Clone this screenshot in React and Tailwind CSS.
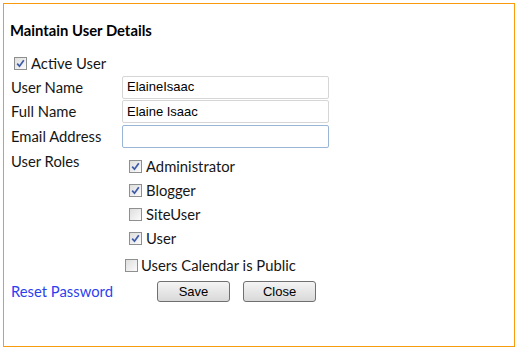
import React from 'react';

const labelFont = { fontFamily: 'Lato, "Open Sans", sans-serif' };

function Box({ checked }) {
  return (
    <span className="inline-flex items-center justify-center w-[13px] h-[13px] border border-[#8e8f8f] bg-gradient-to-br from-[#dedede] to-[#fbfbfb] shrink-0">
      {checked && (
        <svg width="9" height="9" viewBox="0 0 9 9">
          <path d="M1.2 4.6 L3.5 7.2 L7.8 1.2" fill="none" stroke="#3d5aa8" strokeWidth="1.7" />
        </svg>
      )}
    </span>
  );
}

function Check({ checked, label, gap = 'gap-[4px]' }) {
  return (
    <div className={`flex items-center ${gap}`}>
      <Box checked={checked} />
      <span className="text-[14.8px] text-[#161616]">{label}</span>
    </div>
  );
}

function Field({ value }) {
  return (
    <div className="w-[207px] h-[23px] border border-[#d6d6d6] rounded-[2px] bg-white flex items-center px-[4px] text-[13px] text-black font-['Liberation_Sans',Arial,sans-serif]">
      {value}
    </div>
  );
}

function Button({ children }) {
  return (
    <button className="w-[73px] h-[21px] border border-[#707070] rounded-[3px] bg-gradient-to-b from-[#f4f4f4] to-[#d9d9d9] text-[13px] text-black font-['Liberation_Sans',Arial,sans-serif] leading-none">
      {children}
    </button>
  );
}

export default function App() {
  const roles = [
    { name: 'Administrator', on: true },
    { name: 'Blogger', on: true },
    { name: 'SiteUser', on: false },
    { name: 'User', on: true },
  ];

  return (
    <div className="bg-white w-[516px] h-[350px] pt-[3px] pl-[3px]">
      <div className="w-[512px] h-[344px] border border-[#f89c0e] pt-[16px] pl-[6px]" style={labelFont}>
        <div className="h-[20px] flex items-center text-[14.8px] font-bold text-black">Maintain User Details</div>

        <div className="h-[24px] mt-[11px] flex items-center pl-[4px]">
          <Check checked label="Active User" />
        </div>

        <div className="pl-[1px] text-[14.8px] text-[#161616]">
          <div className="h-[24px] flex items-center">
            <span className="w-[111px]">User Name</span>
            <Field value="ElaineIsaac" />
          </div>
          <div className="h-[25px] flex items-center">
            <span className="w-[111px]">Full Name</span>
            <Field value="Elaine Isaac" />
          </div>
          <div className="h-[25px] flex items-center">
            <span className="w-[111px]">Email Address</span>
            <div className="w-[207px] h-[23px] border border-[#9ab6d6] rounded-[2px] bg-white" />
          </div>
          <div className="flex">
            <span className="w-[118px] h-[25px] flex items-center">User Roles</span>
            <div className="pt-[5px]">
              {roles.map((r) => (
                <div key={r.name} className="h-[24px] flex items-center">
                  <Check checked={r.on} label={r.name} />
                </div>
              ))}
            </div>
          </div>
          <div className="h-[24px] mt-[3px] flex items-center pl-[114px]">
            <Check checked={false} label="Users Calendar is Public" gap="gap-[3px]" />
          </div>
          <div className="h-[22px] mt-[3px] flex items-center">
            <a className="w-[146px] text-[#2b3ff0] cursor-pointer">Reset Password</a>
            <div className="flex gap-[13px]">
              <Button>Save</Button>
              <Button>Close</Button>
            </div>
          </div>
        </div>
      </div>
    </div>
  );
}
